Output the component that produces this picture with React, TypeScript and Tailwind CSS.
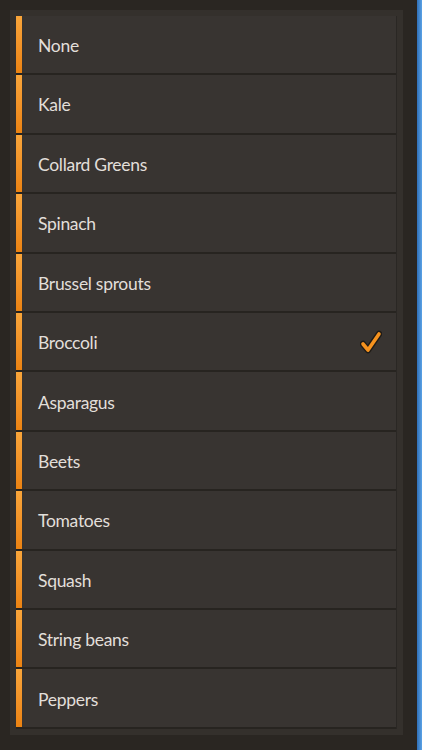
import React from "react";

const items = [
  "None",
  "Kale",
  "Collard Greens",
  "Spinach",
  "Brussel sprouts",
  "Broccoli",
  "Asparagus",
  "Beets",
  "Tomatoes",
  "Squash",
  "String beans",
  "Peppers",
];

function Check() {
  return (
    <svg width="22" height="24" viewBox="0 0 22 24">
      <path
        d="M3 14 L8 20 L19 4"
        fill="none"
        stroke="#1f1b17"
        strokeWidth="6.5"
        strokeLinecap="round"
        strokeLinejoin="round"
      />
      <path
        d="M3 14 L8 20 L19 4"
        fill="none"
        stroke="#f5921e"
        strokeWidth="3.6"
        strokeLinecap="round"
        strokeLinejoin="round"
      />
    </svg>
  );
}

export default function App() {
  return (
    <div className="w-[422px] h-[750px] bg-[#2a2622] flex overflow-hidden" style={{ fontFamily: "Lato, 'Noto Sans', sans-serif" }}>
      <div className="w-[417px] h-full pl-[10px] pt-[10px] pr-[14px] pb-[15px]">
        <div className="w-full h-full bg-[#34302c] pl-[6px] pt-[6px] pr-[6px] pb-[6px]">
          <div className="flex flex-col h-full border-r border-[#2a2724]">
            {items.map((it, i) => (
              <div key={it} className="flex h-[59.42px] border-b-[2.5px] border-[#272420]">
                <div className="w-[6px] bg-gradient-to-b from-[#f9a53a] to-[#ec8311]" />
                <div className="flex-1 bg-[#383431] flex items-center pl-[16px] pr-[14px] pt-[3px]">
                  <span className="text-[17.5px] text-[#e2dfda] tracking-[-0.3px]">{it}</span>
                  {i === 5 && (
                    <span className="ml-auto flex -mt-[3px]">
                      <Check />
                    </span>
                  )}
                </div>
              </div>
            ))}
          </div>
        </div>
      </div>
      <div className="flex-1 h-full bg-gradient-to-r from-[#2f6fb8] to-[#5aa2e6]" />
    </div>
  );
}
